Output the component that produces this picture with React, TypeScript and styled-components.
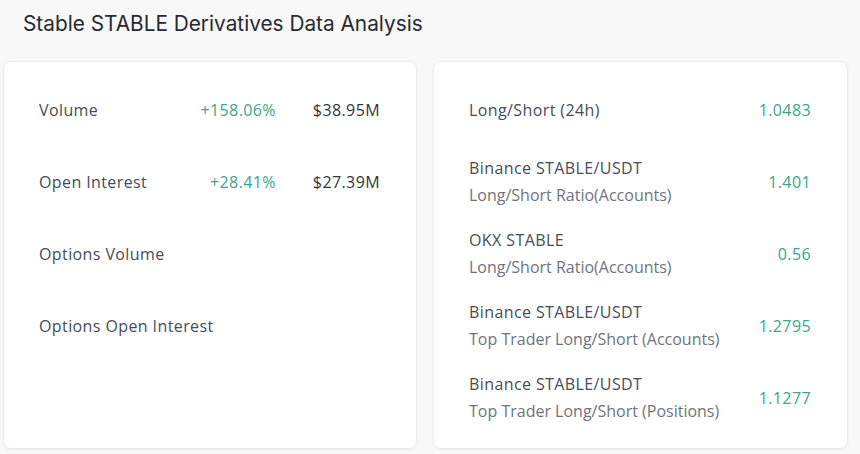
import React from "react";
import styled, { createGlobalStyle } from "styled-components";

const Global = createGlobalStyle`
  html, body { margin: 0; padding: 0; background: #f8f8f8; }
  body { font-family: "Open Sans", "Noto Sans", sans-serif; }
`;

const Page = styled.div`
  width: 860px;
  height: 454px;
  padding: 0 12px 0 3px;
  box-sizing: border-box;
  display: flex;
  flex-direction: column;
`;

const Title = styled.h1`
  margin: 0;
  padding: 10px 0 0 20px;
  height: 61px;
  box-sizing: border-box;
  font-family: Inter, "Noto Sans", sans-serif;
  font-weight: 400;
  font-size: 20.8px;
  line-height: 28px;
  color: #262a30;
`;

const Cards = styled.div`
  display: grid;
  grid-template-columns: 414px 415px;
  gap: 16px;
  height: 386px;
`;

const Card = styled.section`
  background: #ffffff;
  border: 1px solid #ececec;
  border-radius: 8px;
  box-shadow: 0 1px 3px rgba(0, 0, 0, 0.04);
  padding: 12px 36px 14px 35px;
  box-sizing: border-box;
  display: flex;
  flex-direction: column;
`;

const Row = styled.div<{ $cols: string }>`
  height: 72px;
  display: grid;
  grid-template-columns: ${(p) => p.$cols};
  align-items: center;
  font-size: 16px;
  letter-spacing: 0.4px;
  color: #474d57;
`;

const Label = styled.div`
  color: #474d57;
`;

const Stack = styled.div`
  display: flex;
  flex-direction: column;
  line-height: 27px;
`;

const Sub = styled.span`
  color: #6f747c;
  letter-spacing: 0;
`;

const Green = styled.div`
  color: #3aa68c;
  text-align: right;
`;

const Value = styled.div`
  text-align: right;
  color: #32363c;
`;

const leftRows = [
  { label: "Volume", change: "+158.06%", value: "$38.95M" },
  { label: "Open Interest", change: "+28.41%", value: "$27.39M" },
  { label: "Options Volume", change: "", value: "" },
  { label: "Options Open Interest", change: "", value: "" },
];

const rightRows = [
  { top: "Long/Short (24h)", sub: "", value: "1.0483" },
  { top: "Binance STABLE/USDT", sub: "Long/Short Ratio(Accounts)", value: "1.401" },
  { top: "OKX STABLE", sub: "Long/Short Ratio(Accounts)", value: "0.56" },
  { top: "Binance STABLE/USDT", sub: "Top Trader Long/Short (Accounts)", value: "1.2795" },
  { top: "Binance STABLE/USDT", sub: "Top Trader Long/Short (Positions)", value: "1.1277" },
];

export default function App() {
  return (
    <>
      <Global />
      <Page>
        <Title>Stable STABLE Derivatives Data Analysis</Title>
        <Cards>
          <Card>
            {leftRows.map((r) => (
              <Row key={r.label} $cols="1fr auto 104px">
                <Label>{r.label}</Label>
                <Green>{r.change}</Green>
                <Value>{r.value}</Value>
              </Row>
            ))}
          </Card>
          <Card>
            {rightRows.map((r, i) => (
              <Row key={i} $cols="1fr auto">
                <Stack>
                  <Label>{r.top}</Label>
                  {r.sub && <Sub>{r.sub}</Sub>}
                </Stack>
                <Green>{r.value}</Green>
              </Row>
            ))}
          </Card>
        </Cards>
      </Page>
    </>
  );
}
